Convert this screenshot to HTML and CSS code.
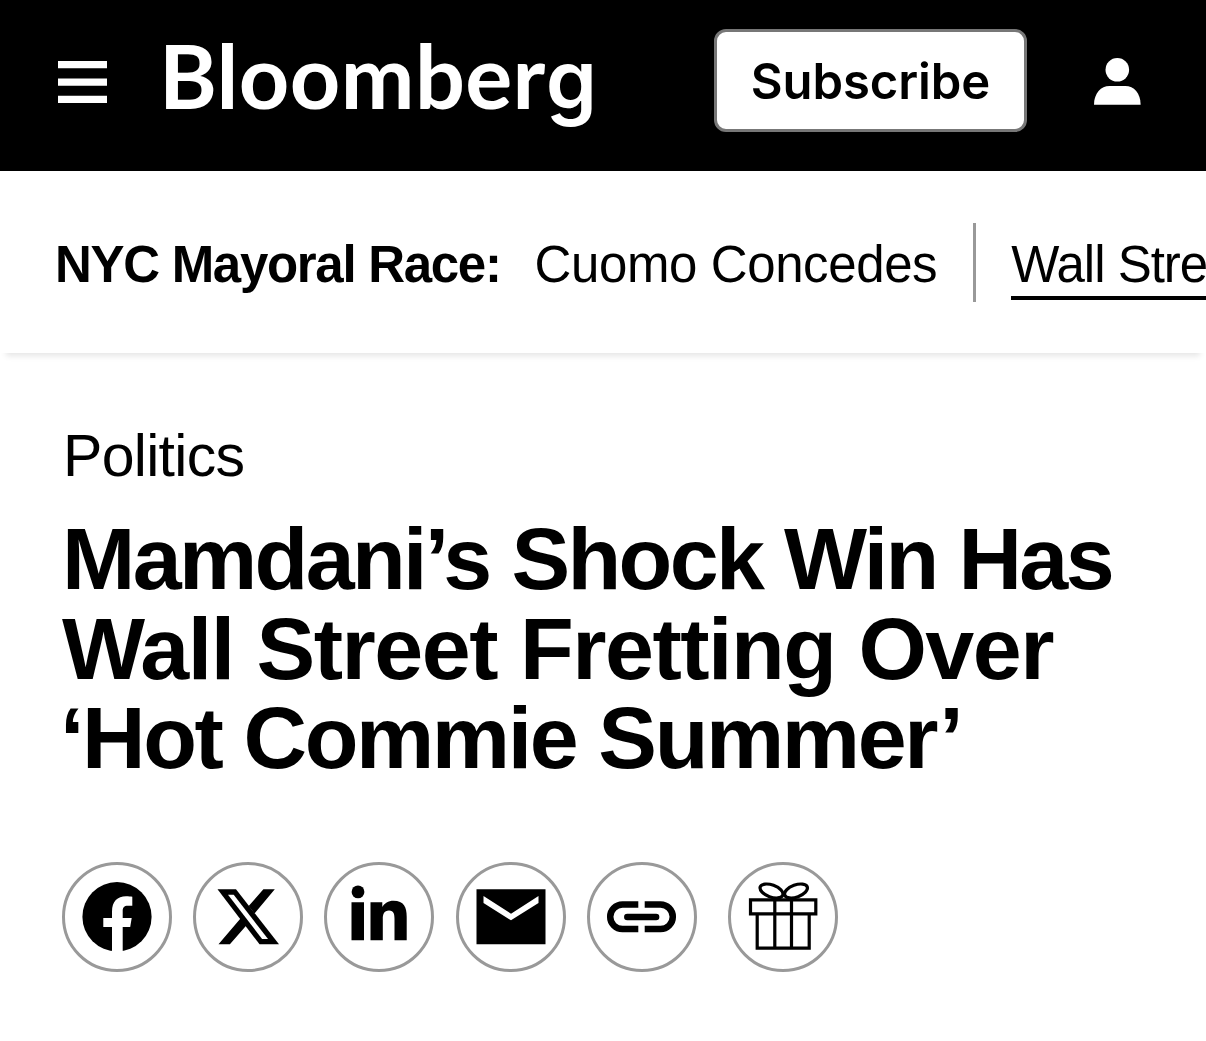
FILE: index.html
```html
<!DOCTYPE html>
<html lang="en">
<head>
    <meta charset="UTF-8">
    <meta name="viewport" content="width=device-width, initial-scale=1.0">
    <title>Mamdani’s Shock Win Has Wall Street Fretting Over ‘Hot Commie Summer’ - Bloomberg</title>
    <link rel="stylesheet" href="styles.css">
</head>
<body>
    <header class="site-header">
        <svg class="menu-icon" viewBox="0 0 49 42" aria-label="Menu">
            <path d="M0 0h49v7.3H0zM0 17.5h49v7.3H0zM0 34.7h49V42H0z"/>
        </svg>
        <div class="logo">Bloomber<span class="logo-g">g</span></div>
        <button class="subscribe-btn">Subscribe</button>
        <svg class="user-icon" viewBox="0 0 47 47" aria-label="Account">
            <circle cx="23.3" cy="11.8" r="11.8"/>
            <path d="M0 46.8C0 35 7 28 15.5 28h15.8C40 28 46.6 35 46.6 46.8z"/>
        </svg>
    </header>

    <nav class="topic-bar">
        <span class="topic-title">NYC Mayoral Race:</span>
        <div class="topic-links">
            <a class="topic-link">Cuomo Concedes</a>
            <span class="divider"></span>
            <a class="topic-link active">Wall Stre</a>
        </div>
    </nav>

    <main class="article">
        <div class="category">Politics</div>
        <h1>
            <span class="line line-1">Mamdani’s Shock Win Has</span>
            <span class="line line-2">Wall Street Fretting Over</span>
            <span class="line line-3">‘Hot Commie Summer’</span>
        </h1>

        <div class="share">
            <a class="share-btn" aria-label="Facebook">
                <svg viewBox="3 3 104 104">
                    <circle cx="55" cy="54.7" r="34.6"/>
                    <path class="cut" d="M50 91V65h-8.700v-9H50v-6.500C50 39.500 55.500 34.300 64 34.300c2.500 0 4.800.2 6.300.5v8.900h-4.500c-3.800 0-5.100 2-5.100 5V56h9l-1.500 9h-7.500v26z"/>
                </svg>
            </a>
            <a class="share-btn" aria-label="X">
                <svg viewBox="3 3 104 104">
                    <path d="M70.400 27.300h11.400L61.500 51.500l-5.800-7.500zM25.500 82.300h11.400L53.500 63.300l-5.800-7z"/>
                    <path d="M24.500 27.300h18.500l43 55h-19.500z"/>
                    <path class="cut" d="M35 32.700h5.700L75 77h-5.900z"/>
                </svg>
            </a>
            <a class="share-btn" aria-label="LinkedIn">
                <svg viewBox="3 3 104 104">
                    <circle cx="34" cy="29.900" r="6.400"/>
                    <path d="M27.500 40.300H40v38H27.500zM46.500 40.300h11.800v4.800c2-3.800 6-6.400 11.200-6.400 10.500 0 13.200 6.500 13.200 16v23.600H70.500V57c0-4.500-.6-8.500-5.500-8.500-5 0-6.200 4-6.200 8.500v21.300H46.500z"/>
                </svg>
            </a>
            <a class="share-btn" aria-label="Email">
                <svg viewBox="3 3 104 104">
                    <path d="M20.500 27.300h69v55h-69z"/>
                    <path class="cut" d="M27.500 34l27.500 17.700L82.500 34v7L55 58.300 27.500 41z"/>
                </svg>
            </a>
            <a class="share-btn" aria-label="Copy link">
                <svg viewBox="3 3 104 104">
                    <g class="stroke link">
                        <path d="M51.300 42.500H35.500a12.300 12.300 0 0 0 0 24.600h15.800M57.700 42.500h15.800a12.300 12.300 0 0 1 0 24.600H57.700"/>
                        <path stroke-linecap="round" d="M40.300 55h28.800"/>
                    </g>
                </svg>
            </a>
            <a class="share-btn gift" aria-label="Gift this article">
                <svg viewBox="3 3 104 104">
                    <g class="stroke">
                        <path d="M22.500 37.800h65.300v14H22.500zM29.200 51.800h52v34.400h-52zM46.800 37.800v48.400M63.500 37.800v48.400"/>
                        <ellipse cx="43.500" cy="29" rx="12" ry="6" transform="rotate(20 43.500 29)"/>
                        <ellipse cx="68" cy="29" rx="12" ry="6" transform="rotate(-20 68 29)"/>
                    </g>
                </svg>
            </a>
        </div>
    </main>
</body>
</html>
```

FILE: styles.css
```css
* {
    box-sizing: border-box;
}

body {
    margin: 0;
    background: #fff;
    color: #000;
    font-family: "Liberation Sans", Arial, sans-serif;
    overflow-x: hidden;
}

.site-header {
    display: flex;
    align-items: center;
    height: 171px;
    padding: 0 65px 10px 58px;
    background: #000;
}

.menu-icon {
    width: 49px;
    height: 42px;
    margin-top: 2px;
    fill: #fff;
}

.logo {
    height: 100px;
    margin: -11px 0 0 52px;
    color: #fff;
    font-family: Lato, sans-serif;
    font-size: 88px;
    font-weight: 700;
    line-height: 100px;
    letter-spacing: 0.4px;
}

.logo-g {
    font-family: Inter, sans-serif;
    font-size: 82px;
    font-weight: 600;
}

.subscribe-btn {
    width: 313px;
    height: 103px;
    margin-left: auto;
    padding: 2px 0 0;
    border: 3px solid #777;
    border-radius: 12px;
    background: #fff;
    color: #000;
    font-family: Inter, sans-serif;
    font-size: 49px;
    font-weight: 600;
    letter-spacing: -0.1px;
}

.user-icon {
    width: 47px;
    height: 47px;
    margin: 2px 0 0 67px;
    fill: #fff;
}

.topic-bar {
    display: flex;
    height: 182px;
    padding: 52px 0 0 55px;
    white-space: nowrap;
    font-size: 51px;
    line-height: 60px;
    box-shadow: 0 9px 6px -6px rgba(0, 0, 0, 0.1);
}

.topic-title {
    margin: 12px 34px 0 0;
    font-weight: 700;
    letter-spacing: -1.3px;
}

.topic-links {
    display: flex;
    flex: 1;
    min-width: 0;
    height: 100px;
    overflow: hidden;
}

.topic-link {
    height: 65px;
    margin-top: 12px;
    letter-spacing: -0.4px;
}

.divider {
    flex-shrink: 0;
    width: 3px;
    height: 79px;
    margin: 0 35px 0 36px;
    background: #999;
}

.active {
    flex: 1 0 auto;
    border-bottom: 4px solid #000;
    letter-spacing: -1px;
}

.article {
    padding: 67px 62px 0;
}

.category {
    margin-left: 1px;
    padding-top: 2px;
    font-size: 59px;
    line-height: 69px;
    letter-spacing: -0.7px;
}

h1 {
    margin: 23px 0 0;
    font-size: 88px;
    line-height: 89.5px;
    white-space: nowrap;
}

.line {
    display: block;
}

.line-1 {
    letter-spacing: -2.65px;
}

.line-2 {
    letter-spacing: -1.5px;
}

.line-3 {
    margin-left: -2px;
    letter-spacing: -2.4px;
}

.share {
    display: flex;
    gap: 21.2px;
    margin-top: 79px;
}

.share-btn {
    width: 110px;
    height: 110px;
    border: 3px solid #999;
    border-radius: 50%;
}

.share-btn svg {
    display: block;
    width: 104px;
    height: 104px;
}

.gift {
    margin-left: 10px;
}

.cut {
    fill: #fff;
}

.stroke {
    fill: none;
    stroke: #000;
    stroke-width: 3.2;
}

.link {
    stroke-width: 6.5;
}
```
